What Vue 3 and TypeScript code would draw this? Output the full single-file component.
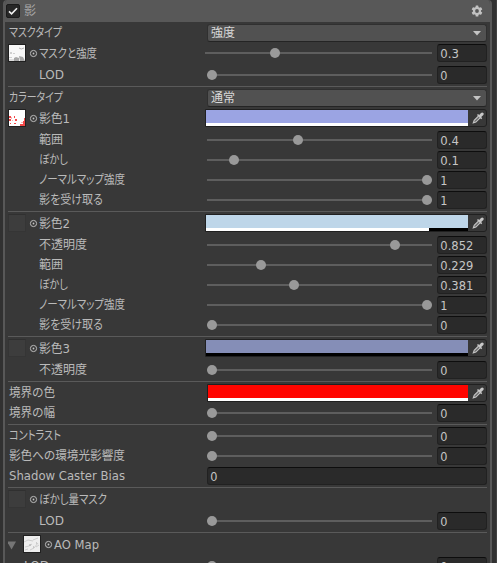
<script setup lang="ts">
interface Row {
  kind: 'select' | 'slider' | 'color' | 'number' | 'texture' | 'sep'
  label?: string
  width?: number
  value?: string
  level?: number
  thumb?: 'gray' | 'red' | 'empty' | 'lines'
  indent?: boolean
  foldout?: boolean
  color?: string
  alpha?: number
}

const sep: Row = { kind: 'sep' }
const slider = (label: string, width: number, value: string, indent = true): Row => ({
  kind: 'slider', label, width, value, level: Number(value), indent,
})

const rows: Row[] = [
  { kind: 'select', label: 'マスクタイプ', width: 53, value: '強度' },
  { kind: 'slider', label: 'マスクと強度', width: 58, value: '0.3', level: 0.3, thumb: 'gray' },
  slider('LOD', 25, '0'),
  sep,
  { kind: 'select', label: 'カラータイプ', width: 54, value: '通常' },
  { kind: 'color', label: '影色1', width: 31, color: '#9ba4e3', alpha: 1, thumb: 'red' },
  slider('範囲', 24, '0.4'),
  slider('ぼかし', 29, '0.1'),
  slider('ノーマルマップ強度', 86, '1'),
  slider('影を受け取る', 64, '1'),
  sep,
  { kind: 'color', label: '影色2', width: 31, color: '#bed6e9', alpha: 0.852, thumb: 'empty' },
  slider('不透明度', 48, '0.852'),
  slider('範囲', 24, '0.229'),
  slider('ぼかし', 29, '0.381'),
  slider('ノーマルマップ強度', 86, '1'),
  slider('影を受け取る', 64, '0'),
  sep,
  { kind: 'color', label: '影色3', width: 31, color: '#858eb7', alpha: 0, thumb: 'empty' },
  slider('不透明度', 48, '0'),
  sep,
  { kind: 'color', label: '境界の色', width: 46, color: '#ff0500', alpha: 1 },
  slider('境界の幅', 46, '0', false),
  sep,
  slider('コントラスト', 52, '0', false),
  slider('影色への環境光影響度', 116, '0', false),
  { kind: 'number', label: 'Shadow Caster Bias', width: 116, value: '0' },
  sep,
  { kind: 'texture', label: 'ぼかし量マスク', width: 68, thumb: 'empty' },
  slider('LOD', 25, '0'),
  sep,
  { kind: 'texture', label: 'AO Map', width: 45, thumb: 'lines', foldout: true },
  slider('LOD', 25, '0'),
]

const numberWidth = (v: string) => [...v].reduce((w, c) => w + (c === '.' ? 4.2 : 7.2), 0)
</script>

<template>
  <div class="window">
    <section class="panel">
      <header class="header">
        <span class="check">
          <svg width="14" height="14" viewBox="0 0 14 14"><path d="M3 7.3 5.6 9.8 11 4.3" /></svg>
        </span>
        <span class="title">影</span>
        <svg class="gear" width="12" height="12" viewBox="0 0 12 12">
          <g fill="#c2c2c2">
            <rect v-for="a in [0, 60, 120]" :key="a" x="4.6" y="0.6" width="2.8" height="10.8" rx="0.5" :transform="`rotate(${a} 6 6)`" />
            <circle cx="6" cy="6" r="4.1" />
          </g>
          <circle cx="6" cy="6" r="1.9" fill="#585858" />
        </svg>
      </header>

      <div class="body">
        <template v-for="(row, i) in rows" :key="i">
          <hr v-if="row.kind === 'sep'" class="sep">
          <div v-else class="row" :class="{ textured: row.thumb, nested: i === rows.length - 1 }">
            <div class="name" :class="{ indent: row.indent }">
              <svg v-if="row.foldout" class="foldout" width="15" height="18" viewBox="0 0 15 18"><path d="M-1 6.5h9L3.5 14.5z" fill="#757575" /></svg>
              <template v-if="row.thumb">
                <span class="thumb" :class="row.thumb">
                  <svg v-if="row.thumb === 'gray'" width="16" height="16" viewBox="0 0 16 16">
                    <rect width="16" height="16" fill="#f8f8f8" />
                    <path d="M1 7h2v2H1zM4 8h2v1H4zM0 12h3v1H0z" fill="#d0d0d0" />
                    <path d="M10 3q2 2 5 0" fill="none" stroke="#b4b4b4" />
                    <path d="M5 16v-3l2-1 3 1v3zM10 11l4 1 2 4h-5z" fill="#a8a8a8" />
                    <path d="M0 14h5v2H0z" fill="#ddd" />
                  </svg>
                  <svg v-else-if="row.thumb === 'red'" width="16" height="16" viewBox="0 0 16 16">
                    <rect width="16" height="16" fill="#fff" />
                    <path d="M0 6h2v2H0zM0 9h2v2H0zM5 6h1v2H5zM6 9h2v2H6zM5 13h2v1H5zM1 13h1v1H1zM15 8h1v8h-5v-2h3v-3h1z" fill="#f34848" />
                    <path d="M2 7h1v2H2zM3 10h1v1H3zM12 12h2v1h-2z" fill="#f9b4b4" />
                  </svg>
                  <svg v-else-if="row.thumb === 'lines'" width="16" height="16" viewBox="0 0 16 16">
                    <rect width="16" height="16" fill="#eee" />
                    <path d="M0 6 4 4 9 5M1 11l4-1 3-2M6 14l4-2 4-5M9 4l5-2M1 14l3-1M12 11l3-2" fill="none" stroke="#cdcdcd" />
                    <path d="M5 9h2M9 11h1M12 7h1" stroke="#a8a8a8" />
                  </svg>
                </span>
                <svg class="target" width="9" height="18" viewBox="0 0 9 18">
                  <circle cx="4.5" cy="9.5" r="3.1" fill="none" stroke="#bcbcbc" stroke-width="1" />
                  <circle cx="4.5" cy="9.5" r="0.9" fill="#c4c4c4" />
                </svg>
              </template>
              <svg class="label" :width="row.width" height="18">
                <text x="0" :y="row.thumb ? 14 : 13" :textLength="row.width" lengthAdjust="spacingAndGlyphs">{{ row.label }}</text>
              </svg>
            </div>

            <div v-if="row.kind === 'select'" class="select">
              <span>{{ row.value }}</span>
              <svg width="8" height="5" viewBox="0 0 8 5"><path d="M0 0h8L4 4.5z" fill="#c4c4c4" /></svg>
            </div>

            <template v-else-if="row.kind === 'slider'">
              <div class="track">
                <span class="knob" :style="{ '--level': row.level }"></span>
              </div>
              <div class="field">
                <svg width="46" height="16">
                  <text x="2.3" y="13" :textLength="numberWidth(row.value!)" lengthAdjust="spacingAndGlyphs">{{ row.value }}</text>
                </svg>
              </div>
            </template>

            <div v-else-if="row.kind === 'color'" class="color">
              <div class="swatch" :style="{ background: row.color }">
                <div class="alpha"><div class="fill" :style="{ width: row.alpha! * 100 + '%' }"></div></div>
              </div>
              <div class="picker">
                <svg width="12" height="12" viewBox="0 0 12 12">
                  <path d="M6.6 4 2.2 8.4 1.3 10.9l2.6-.8L8.3 5.7" fill="#6a6a6a" stroke="#c4c4c4" stroke-width="1.1" />
                  <path d="M5 3 6 2l1.2 1 1.8-2Q10.3 0 11.3 1q1 1.2-.2 2.3L9.2 5l1 1.2-1 1z" fill="#c8c8c8" />
                </svg>
              </div>
            </div>

            <div v-else-if="row.kind === 'number'" class="field wide">
              <svg width="46" height="16">
                <text x="2.3" y="13" textLength="7.2" lengthAdjust="spacingAndGlyphs">{{ row.value }}</text>
              </svg>
            </div>
          </div>
        </template>
      </div>
    </section>
  </div>
</template>

<style>
body {
  margin: 0;
  background: #323232;
  overflow: hidden;
}
</style>

<style scoped>
.window {
  box-sizing: border-box;
  width: 497px;
  height: 563px;
  padding: 0 4px 0 3px;
  overflow: hidden;
  border-right: 1px solid #414141;
  background: #313131;
  color: #bababa;
  font: 12px/18px "DejaVu Sans", "Noto Sans CJK JP", sans-serif;
}
.panel {
  box-sizing: border-box;
  width: 489px;
  height: 570px;
  border: solid #585858;
  border-width: 0 2px;
  border-radius: 4px 4px 0 0;
  background: #383838;
  overflow: hidden;
}
.header {
  box-sizing: border-box;
  display: flex;
  align-items: center;
  height: 22px;
  padding: 0 7px 0 1px;
  background: #585858;
}
.check {
  box-sizing: border-box;
  width: 14px;
  height: 14px;
  border: 1px solid #1b1b1b;
  border-radius: 2px;
  background: #272727;
}
.check svg {
  display: block;
  margin: -1px;
  fill: none;
  stroke: #f0f0f0;
  stroke-width: 1.6;
}
.title {
  margin-left: 4px;
  color: #a8a8a8;
  line-height: 20px;
}
.gear {
  margin-left: auto;
}
.body {
  display: flex;
  flex-direction: column;
  gap: 2px;
  padding: 2px 3px 0;
}
.row {
  display: flex;
  flex: none;
  height: 18px;
}
.row.textured {
  margin-bottom: 2px;
}
.sep {
  flex: none;
  width: 100%;
  height: 1px;
  margin: 0;
  border: 0;
  background: #5a5a5a;
}
.name {
  box-sizing: border-box;
  display: flex;
  flex: none;
  width: 199px;
  padding-left: 1px;
}
.textured .name {
  width: 197px;
  padding-left: 0;
}
.name.indent {
  padding-left: 31px;
}
.nested .name {
  padding-left: 16px;
}
.label {
  display: block;
  overflow: visible;
}
text {
  fill: currentColor;
  font-size: 12.5px;
  font-feature-settings: "palt";
}
.foldout {
  flex: none;
}
.thumb {
  box-sizing: border-box;
  flex: none;
  width: 18px;
  height: 18px;
  border: 1px solid #202020;
  background: #3d3d3d;
}
.thumb svg {
  display: block;
}
.thumb.empty {
  border-color: #303030 #353535 #353535;
}
.target {
  flex: none;
  margin: 0 1px 0 3px;
}
.select {
  box-sizing: border-box;
  display: flex;
  flex: 1;
  align-items: center;
  justify-content: space-between;
  padding: 0 5px 0 3px;
  border: 1px solid #303030;
  border-bottom-color: #242424;
  border-radius: 3px;
  background: #515151;
  color: #d8d8d8;
  line-height: 16px;
}
.track {
  flex: 1;
  height: 2px;
  margin: 8px 5px 0 0;
  background: #5e5e5e;
}
.knob {
  display: block;
  width: 10px;
  height: 10px;
  margin-top: -4px;
  margin-left: calc((100% - 10px) * var(--level));
  border-radius: 50%;
  background: #999;
}
.field {
  box-sizing: border-box;
  flex: none;
  width: 50px;
  border: 1px solid #212121;
  border-top-color: #0d0d0d;
  border-radius: 3px;
  background: #2a2a2a;
  color: #c6c6c6;
}
.field svg {
  display: block;
}
.field text {
  font-size: 12.8px;
}
.field.wide {
  flex: 1;
}
.color {
  box-sizing: border-box;
  display: flex;
  flex: 1;
  border: 1px solid #202020;
  border-radius: 0 3px 3px 0;
}
.swatch {
  display: flex;
  flex: 1;
  align-items: flex-end;
}
.alpha {
  width: 100%;
  height: 3px;
  background: #000;
}
.fill {
  height: 3px;
  background: #fff;
}
.picker {
  box-sizing: border-box;
  display: flex;
  align-items: center;
  justify-content: center;
  width: 18px;
  padding-left: 2px;
}
</style>
